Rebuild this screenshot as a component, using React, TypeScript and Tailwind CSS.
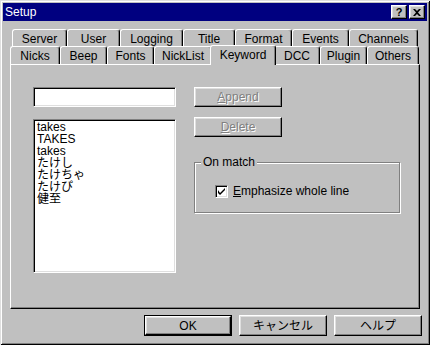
import React from "react";

const backTabs = [
  { label: "Server", w: "w-[55px]" },
  { label: "User", w: "w-[53px]" },
  { label: "Logging", w: "w-[63px]" },
  { label: "Title", w: "w-[52px]" },
  { label: "Format", w: "w-[57px]" },
  { label: "Events", w: "w-[57px]" },
  { label: "Channels", w: "w-[69px]" },
];

const frontTabs = [
  { label: "Nicks", w: "w-[50px]" },
  { label: "Beep", w: "w-[47px]" },
  { label: "Fonts", w: "w-[47px]" },
  { label: "NickList", w: "w-[58px]" },
  { label: "Keyword", w: "w-[66px]", active: true },
  { label: "DCC", w: "w-[46px]" },
  { label: "Plugin", w: "w-[47px]" },
  { label: "Others", w: "w-[52px]" },
];

const keywords = ["takes", "TAKES", "takes", "たけし", "たけちゃ", "たけぴ", "健至"];

const raised =
  "border-t border-l border-white border-r border-b border-r-black border-b-black shadow-[inset_-1px_-1px_#808080,inset_1px_1px_#dfdfdf]";
const sunken =
  "border border-[#808080] border-r-white border-b-white shadow-[inset_1px_1px_#000,inset_-1px_-1px_#dfdfdf]";

function Tab({ label, w, active }: { label: string; w: string; active?: boolean }) {
  if (active) {
    return (
      <div
        className={`${w} -mx-[2px] h-[20px] -mb-[1px] relative z-10 bg-[#c0c0c0] border-t border-l border-white border-r border-r-black shadow-[inset_-1px_0_#808080] rounded-t-[3px] flex justify-center pt-[2px] leading-[14px]`}
      >
        {label}
      </div>
    );
  }
  return (
    <div
      className={`${w} h-[18px] shrink-0 border-t border-l border-white border-r border-r-black shadow-[inset_-1px_0_#808080] rounded-t-[3px] flex justify-center pt-[2px] leading-[14px]`}
    >
      {label}
    </div>
  );
}

function Button({
  children,
  disabled,
  isDefault,
  className = "",
}: {
  children: React.ReactNode;
  disabled?: boolean;
  isDefault?: boolean;
  className?: string;
}) {
  const inner = (
    <div
      className={`${raised} w-full h-full flex items-center justify-center ${
        disabled ? "text-[#808080] [text-shadow:1px_1px_0_#fff]" : "text-black"
      }`}
    >
      {children}
    </div>
  );
  if (isDefault) {
    return <div className={`${className} border border-black`}>{inner}</div>;
  }
  return <div className={className}>{inner}</div>;
}

export default function App() {
  return (
    <div
      className="w-[430px] h-[345px] bg-[#c0c0c0] p-[3px] text-[12px] text-black shadow-[inset_1px_1px_#dfdfdf,inset_-1px_-1px_#000,inset_2px_2px_#fff,inset_-2px_-2px_#808080] overflow-hidden"
      style={{ fontFamily: '"Liberation Sans", "Noto Sans CJK JP", sans-serif' }}
    >
      {/* Title bar */}
      <div className="h-[18px] bg-[#000080] flex items-center justify-between pl-[2px] pr-[2px]">
        <span className="text-white leading-none">Setup</span>
        <div className="flex gap-[2px]">
          <div className={`${raised} bg-[#c0c0c0] w-[16px] h-[14px] flex items-center justify-center font-bold text-[11px] leading-none`}>
            ?
          </div>
          <div className={`${raised} bg-[#c0c0c0] w-[16px] h-[14px] flex items-center justify-center`}>
            <svg width="8" height="7" viewBox="0 0 8 7">
              <path d="M0 0h2l2 2 2-2h2L5 3.5 8 7H6L4 5 2 7H0l3-3.5z" fill="#000" />
            </svg>
          </div>
        </div>
      </div>

      {/* Tabs + panel */}
      <div className="mt-[8px] ml-[7px] w-[410px]">
        <div className="flex ml-[2px] h-[18px]">
          {backTabs.map((t) => (
            <Tab key={t.label} label={t.label} w={t.w} />
          ))}
        </div>
        <div className="flex items-end h-[17px]">
          {frontTabs.map((t) => (
            <Tab key={t.label} label={t.label} w={t.w} active={t.active} />
          ))}
        </div>
        <div className="h-[245px] border-t border-l border-white border-r border-b border-r-black border-b-black shadow-[inset_-1px_-1px_#808080] pt-[22px] pl-[22px] flex gap-[18px]">
          {/* Left column */}
          <div className="w-[143px] flex flex-col">
            <div className={`${sunken} h-[20px] bg-white`} />
            <div className={`${sunken} mt-[12px] h-[154px] bg-white pt-[1px] pl-[3px]`}>
              {keywords.map((k, i) => (
                <div key={i} className="leading-[12px] h-[12px]">
                  {k}
                </div>
              ))}
            </div>
          </div>

          {/* Right column */}
          <div className="flex flex-col">
            <Button disabled className="w-[88px] h-[20px]">
              <span>
                <span className="underline">A</span>ppend
              </span>
            </Button>
            <Button disabled className="w-[88px] h-[20px] mt-[10px]">
              <span>
                <span className="underline">D</span>elete
              </span>
            </Button>
            <div className="relative mt-[25px] w-[206px] h-[51px] border border-[#808080] shadow-[1px_1px_0_#fff,inset_1px_1px_0_#fff]">
              <span className="absolute -top-[8px] left-[6px] bg-[#c0c0c0] px-[2px] leading-[14px]">On match</span>
              <div className="flex items-center gap-[5px] mt-[21px] ml-[20px]">
                <div className={`${sunken} w-[13px] h-[13px] bg-white flex items-center justify-center`}>
                  <svg width="7" height="7" viewBox="0 0 7 7">
                    <path d="M0 2v3l2 2L7 2V0L2 5z" fill="#000" />
                  </svg>
                </div>
                <span className="leading-[14px]">
                  <span className="underline">E</span>mphasize whole line
                </span>
              </div>
            </div>
          </div>
        </div>
      </div>

      {/* Bottom buttons */}
      <div className="flex gap-[7px] mt-[6px] ml-[141px]">
        <Button isDefault className="w-[88px] h-[21px]">
          OK
        </Button>
        <Button className="w-[88px] h-[21px]">キャンセル</Button>
        <Button className="w-[88px] h-[21px]">ヘルプ</Button>
      </div>
    </div>
  );
}
